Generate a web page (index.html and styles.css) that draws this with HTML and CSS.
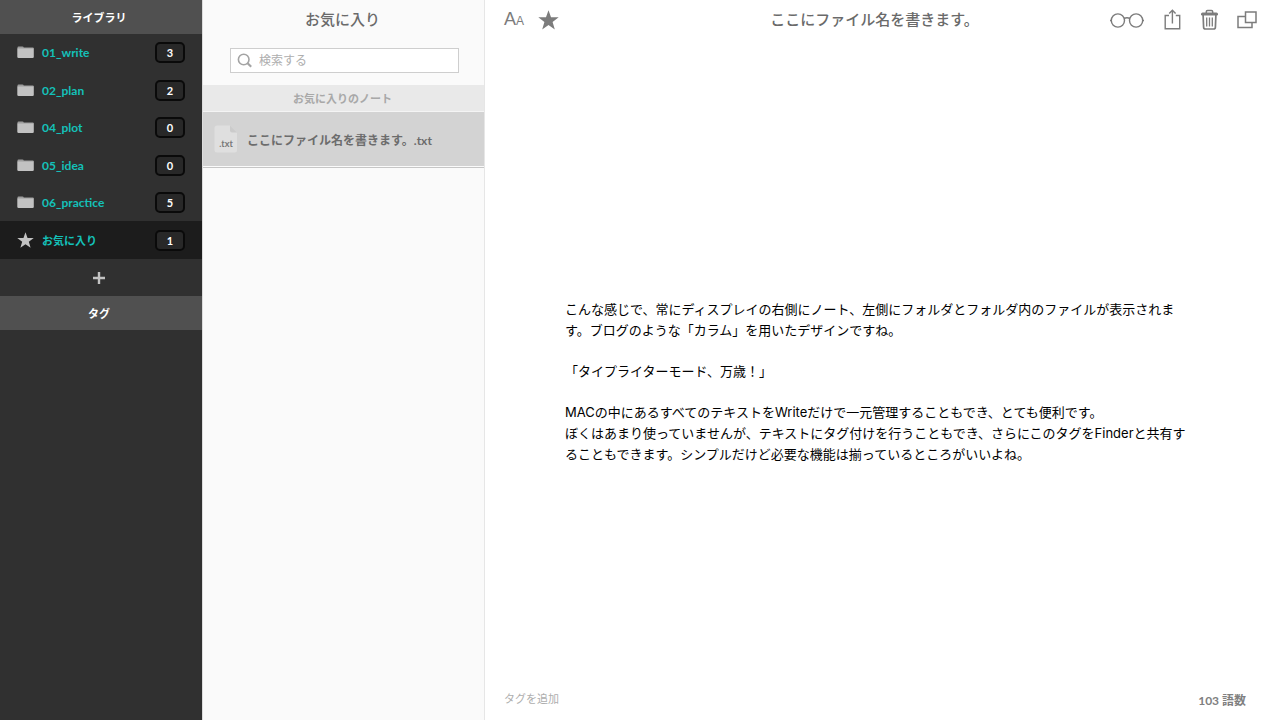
FILE: index.html
```html
<!DOCTYPE html>
<html lang="ja">
<head>
<meta charset="utf-8">
<meta name="viewport" content="width=device-width, initial-scale=1">
<title>Write</title>
<link rel="stylesheet" href="styles.css">
</head>
<body>
<svg class="symbols" aria-hidden="true">
  <symbol id="folder" viewBox="0 0 17 13"><path d="M0.5 3V1.5Q0.5 0.5 1.5 0.5H5.5Q6.5 0.5 6.8 1.5H16Q16.7 1.5 16.7 2.2V3Z" fill="currentColor" opacity="0.75"/><path d="M0.3 2.6H16.8V10.8Q16.8 12 15.6 12H1.5Q0.3 12 0.3 10.8Z" fill="currentColor"/></symbol>
  <symbol id="star" viewBox="0 0 20 20"><path d="M10 0.3L12.4 7H19.7L13.9 11.4L16 18.6L10 14.4L4 18.6L6.1 11.4L0.3 7H7.6Z" fill="currentColor"/></symbol>
</svg>
<div class="app">
  <nav class="sidebar" aria-label="ライブラリ">
    <h2 class="sidebar-title">ライブラリ</h2>
    <ul class="folders">
      <li class="folder-row"><a class="folder" href="#write"><svg class="folder-icon"><use href="#folder"/></svg><span class="folder-name">01_write</span><span class="count">3</span></a></li>
      <li class="folder-row"><a class="folder" href="#plan"><svg class="folder-icon"><use href="#folder"/></svg><span class="folder-name">02_plan</span><span class="count">2</span></a></li>
      <li class="folder-row"><a class="folder" href="#plot"><svg class="folder-icon"><use href="#folder"/></svg><span class="folder-name">04_plot</span><span class="count">0</span></a></li>
      <li class="folder-row"><a class="folder" href="#idea"><svg class="folder-icon"><use href="#folder"/></svg><span class="folder-name">05_idea</span><span class="count">0</span></a></li>
      <li class="folder-row"><a class="folder" href="#practice"><svg class="folder-icon"><use href="#folder"/></svg><span class="folder-name">06_practice</span><span class="count">5</span></a></li>
      <li class="folder-row"><a class="folder folder-active" href="#favorites" aria-current="page"><svg class="folder-icon folder-star"><use href="#star"/></svg><span class="folder-name">お気に入り</span><span class="count">1</span></a></li>
      <li class="folder-row"><button class="add-folder" type="button" aria-label="フォルダを追加"><svg class="plus" viewBox="0 0 12 12"><path d="M6 0V12M0 6H12" stroke="currentColor" stroke-width="2.4"/></svg></button></li>
    </ul>
    <h2 class="sidebar-title">タグ</h2>
  </nav>

  <section class="notes">
    <h1 class="notes-title">お気に入り</h1>
    <label class="search">
      <svg class="search-icon" viewBox="0 0 16 16"><circle cx="6.7" cy="6.5" r="5.3" fill="none" stroke="currentColor" stroke-width="1.6"/><path d="M10.6 10.3L14.2 13.7" stroke="currentColor" stroke-width="2.2"/></svg>
      <input class="search-input" type="search" placeholder="検索する" aria-label="検索する">
    </label>
    <h2 class="group-title">お気に入りのノート</h2>
    <a class="note" href="#note">
      <svg class="note-icon" viewBox="0 0 24 28"><path d="M3 0.5H16L23 7.5V25Q23 27.5 20.5 27.5H3Q0.5 27.5 0.5 25V3Q0.5 0.5 3 0.5Z" fill="#dfdfdf"/><path d="M16 0.5L23 7.5H18Q16 7.5 16 5.5Z" fill="#cbcbcb"/><text class="note-ext" x="12" y="22" text-anchor="middle">.txt</text></svg>
      <span class="note-name">ここにファイル名を書きます。.txt</span>
    </a>
  </section>

  <main class="editor">
    <header class="toolbar">
      <div class="tools tools-left">
        <button class="tool" type="button" aria-label="フォント"><span class="font-large">A</span><span class="font-small">A</span></button>
        <button class="tool" type="button" aria-label="お気に入り"><svg class="tool-star"><use href="#star"/></svg></button>
      </div>
      <h2 class="file-title">ここにファイル名を書きます。</h2>
      <div class="tools tools-right">
        <button class="tool" type="button" aria-label="プレビュー"><svg width="35" height="22" viewBox="0 0 35 22" fill="none" stroke="currentColor" stroke-width="1.4"><circle cx="8.9" cy="11.5" r="6.6"/><circle cx="27.1" cy="11.5" r="6.6"/><path d="M15 9.5Q18 8 21 9.5M1 11.5H2.5M33.5 11.5H35"/></svg></button>
        <button class="tool" type="button" aria-label="共有"><svg width="18" height="22" viewBox="0 0 18 22" fill="none" stroke="currentColor" stroke-width="1.4"><path d="M6 6.5H2.2V19.7H16.7V6.5H12.8M9.4 14.5V1.5M6.2 4.5L9.4 1.2L12.6 4.5"/></svg></button>
        <button class="tool" type="button" aria-label="削除"><svg width="18" height="22" viewBox="0 0 18 22" fill="none" stroke="currentColor"><path d="M1.5 6V4.8Q1.5 4 2.5 4H16.5Q17.5 4 17.5 4.8V6Z" fill="currentColor"/><path d="M6.3 4V2.7Q6.3 1.5 7.5 1.5H11.5Q12.7 1.5 12.7 2.7V4" stroke-width="1.5"/><path d="M3.1 6L3.6 18.2Q3.7 20 5.5 20H13.5Q15.3 20 15.4 18.2L15.9 6" stroke-width="1.7"/><path d="M6.7 8.5V17.5M9.5 8.5V17.5M12.3 8.5V17.5" stroke-width="1.3"/></svg></button>
        <button class="tool" type="button" aria-label="別ウインドウ"><svg width="20" height="22" viewBox="0 0 20 22" fill="none" stroke="currentColor" stroke-width="1.5"><path d="M8.5 7.5H1V18.5H15V13.5"/><path d="M8.5 3H19V13.5H8.5Z"/></svg></button>
      </div>
    </header>
    <article class="document">
      <p class="paragraph">こんな感じで、常にディスプレイの右側にノート、左側にフォルダとフォルダ内のファイルが表示されます。ブログのような「カラム」を用いたデザインですね。</p>
      <p class="paragraph">「タイプライターモード、万歳！」</p>
      <p class="paragraph">MACの中にあるすべてのテキストをWriteだけで一元管理することもでき、とても便利です。<br>ぼくはあまり使っていませんが、テキストにタグ付けを行うこともでき、さらにこのタグをFinderと共有することもできます。シンプルだけど必要な機能は揃っているところがいいよね。</p>
    </article>
    <footer class="statusbar">
      <input class="tag-input" type="text" placeholder="タグを追加" aria-label="タグを追加">
      <span class="word-count">103 語数</span>
    </footer>
  </main>
</div>
</body>
</html>
```
FILE: styles.css
```css
* {
  box-sizing: border-box;
}

body {
  margin: 0;
  font-family: "Liberation Sans", "Noto Sans CJK JP", sans-serif;
  background: #fff;
}

h1, h2, p, ul {
  margin: 0;
  padding: 0;
}

button, input {
  border: 0;
  padding: 0;
  background: none;
  color: inherit;
  font-family: inherit;
}

.symbols {
  display: none;
}

.app {
  display: grid;
  grid-template-columns: 203px 282px 1fr;
  min-height: 100vh;
}

/* Library */
.sidebar {
  background: #303030;
  border-right: 1px solid #dcdcdc;
  font-family: Lato, "Noto Sans CJK JP", sans-serif;
}

.sidebar-title {
  height: 34px;
  padding-top: 1px;
  padding-right: 4px;
  background: #505050;
  color: #fff;
  font-size: 11px;
  line-height: 34px;
  text-align: center;
}

.folders {
  list-style: none;
}

.folder-row {
  display: flex;
  height: 37px;
}

.folder-row:nth-child(even) {
  height: 38px;
}

.folder {
  display: flex;
  flex: 1;
  align-items: center;
  padding: 0 17px;
  color: #14c1b9;
  font-size: 12px;
  font-weight: 700;
  text-decoration: none;
}

.folder-active {
  background: #1c1c1c;
  font-size: 11px;
}

.folder-icon {
  width: 17px;
  height: 13px;
  margin-right: 8px;
  color: #c2c2c2;
}

.folder-star {
  height: 17px;
}

.folder-name {
  flex: 1;
}

.count {
  width: 30px;
  height: 21px;
  border: 2px solid #0a0a0a;
  border-radius: 5px;
  background: #282828;
  color: #fff;
  font-size: 11px;
  line-height: 17px;
  text-align: center;
}

.add-folder {
  display: flex;
  flex: 1;
  align-items: center;
  justify-content: center;
  padding-right: 4px;
  color: #c2c2c2;
}

.plus {
  width: 12px;
  height: 12px;
}

/* Note list */
.notes {
  background: #fafafa;
  border-right: 1px solid #e6e6e6;
}

.notes-title {
  height: 48px;
  padding-top: 8px;
  padding-right: 2px;
  color: #6a6a6a;
  font-size: 15px;
  font-weight: 500;
  line-height: 24px;
  text-align: center;
}

.search {
  display: flex;
  align-items: center;
  gap: 6px;
  height: 25px;
  margin: 0 25px 12px 27px;
  padding: 0 6px;
  border: 1px solid #cecece;
  background: #fff;
  color: #a4a4a4;
}

.search-icon {
  width: 16px;
  height: 16px;
}

.search-input {
  flex: 1;
  min-width: 0;
  font-size: 12px;
  appearance: none;
}

.search-input::placeholder,
.tag-input::placeholder {
  color: #aeaeae;
}

.group-title {
  height: 27px;
  padding-top: 1px;
  padding-right: 2px;
  border-bottom: 1px solid #f4f4f4;
  background: #e9e9e9;
  color: #a8a8a8;
  font-size: 11px;
  line-height: 27px;
  text-align: center;
}

.note {
  display: flex;
  align-items: center;
  gap: 9px;
  height: 54px;
  padding-left: 11px;
  background: #d3d3d3;
  box-shadow: 0 1px #fafafa, 0 2px #c6c6c6;
  color: #6c6c6c;
  font-size: 12px;
  font-weight: 700;
  text-decoration: none;
}

.note-icon {
  width: 24px;
  height: 28px;
}

.note-ext {
  fill: #777;
  font-size: 9px;
  font-weight: 700;
  font-family: Lato, sans-serif;
}

.note-name {
  font-family: Lato, "Noto Sans CJK JP", sans-serif;
}

/* Editor */
.editor {
  display: flex;
  flex-direction: column;
}

.toolbar {
  display: flex;
  align-items: center;
  justify-content: space-between;
  height: 40px;
  padding: 0 23px 0 19px;
  color: #7c7c7c;
}

.tools {
  display: flex;
  flex: 1;
  align-items: center;
}

.tools-left {
  gap: 14px;
}

.tools-right {
  justify-content: flex-end;
  gap: 19px;
}

.tool {
  display: block;
  line-height: 20px;
}

.tool svg {
  display: block;
}

.tool-star {
  width: 21px;
  height: 21px;
}

.font-large {
  font-size: 18px;
}

.font-small {
  font-size: 12px;
}

.file-title {
  padding-right: 12px;
  color: #6a6a6a;
  font-size: 15px;
  font-weight: 500;
  line-height: 24px;
}

.document {
  display: flex;
  flex: 1;
  flex-direction: column;
  gap: 20px;
  padding: 259px 85px 20px 80px;
  color: #000;
  font-family: Inter, "Noto Sans CJK JP", sans-serif;
  font-size: 13px;
  line-height: 21px;
}

.statusbar {
  display: flex;
  align-items: center;
  justify-content: space-between;
  height: 42px;
  padding: 0 34px 0 19px;
}

.tag-input {
  font-size: 11px;
}

.word-count {
  color: #808080;
  font-family: Lato, "Noto Sans CJK JP", sans-serif;
  font-size: 12px;
  font-weight: 700;
}
```
